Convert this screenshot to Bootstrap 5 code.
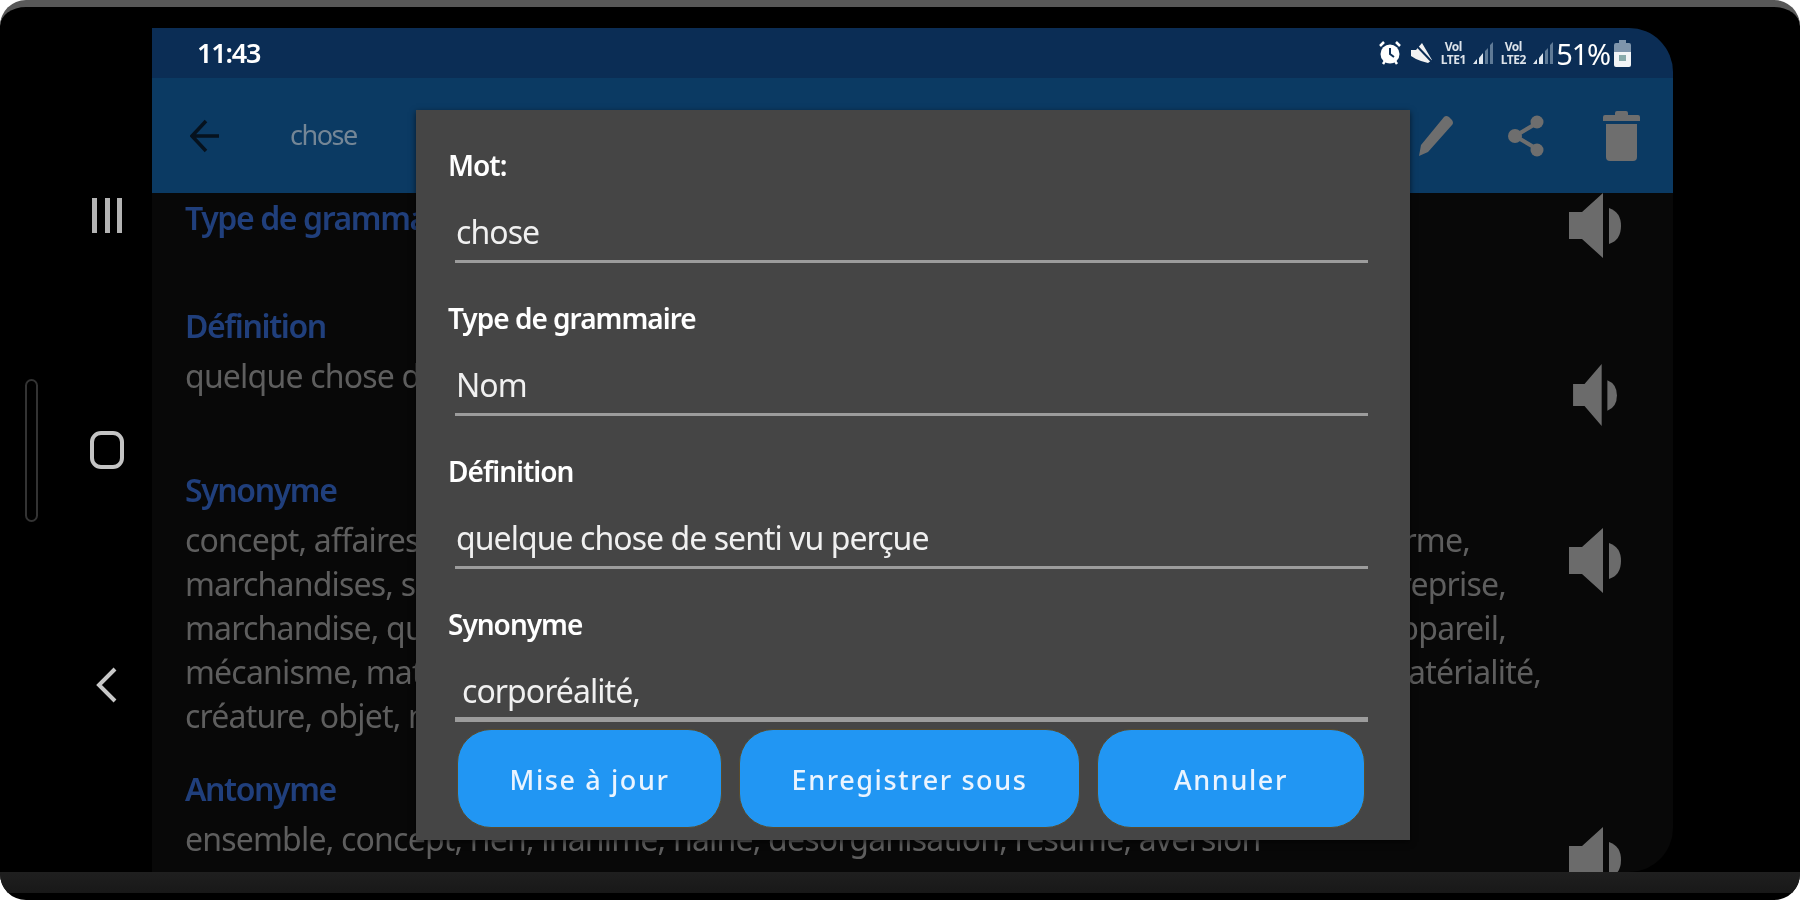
<!DOCTYPE html>
<html lang="fr">
<head>
    <meta charset="UTF-8">
    <meta name="viewport" content="width=device-width, initial-scale=1.0">
    <title>chose</title>
    <link href="https://cdn.jsdelivr.net/npm/bootstrap@5.3.0/dist/css/bootstrap.min.css" rel="stylesheet">
    <style>
        html, body { height: 100%; background: #fff; overflow: hidden; }
        body { font-family: "Noto Sans", "Open Sans", sans-serif; }
        .phone { height: 900px; background: #000; border-top: 7px solid #585858; border-radius: 26px; overflow: hidden; filter: blur(.6px); }
        .phone-main { height: 865px; padding-top: 21px; }
        .rail { width: 152px; }
        .rail-pill { width: 13px; height: 143px; margin: 0 24px 0 25px; border: 2px solid #333; border-radius: 7px; }
        .rail-icons { width: 90px; gap: 198px; }
        .rail-bars { width: 30px; height: 35px; }
        .rail-bars span { width: 5px; background: #b4b4b4; }
        .rail-home { width: 34px; height: 38px; border: 4px solid #c4c4c4; border-radius: 11px; }
        .screen { width: 1521px; height: 844px; background: #080808; border-radius: 0 44px 44px 0; overflow: hidden; }
        .status-bar { height: 50px; background: #0b2d55; padding: 0 42px 0 45px; }
        .status-time { color: #fff; font-size: 27px; font-weight: 600; letter-spacing: -1.2px; }
        .status-pct { color: #fff; font-size: 29px; letter-spacing: -1.2px; line-height: 1; margin-left: 2px; }
        .lte { color: #dde3ea; font-size: 12px; line-height: 13px; font-weight: 700; letter-spacing: -.5px; text-align: center; width: 30px; }
        .app-bar { height: 115px; background: #0b3a63; padding-left: 38px; }
        .app-title { color: #748696; font-size: 27px; letter-spacing: -1.5px; margin-left: 70px; }
        .app-actions { gap: 55px; padding-right: 33px; }
        .act-share { margin-right: 4px; }
        .word-list { padding: 3px 0 0 33px; }
        .word-sec { padding-right: 52px; }
        .word-text { width: 1384px; }
        .sec-head { color: #203f7c; font-size: 32px; font-weight: 600; line-height: 44px; letter-spacing: -1.4px; }
        .sec-line { color: #5e5e5e; font-size: 32px; line-height: 44px; letter-spacing: -.8px; white-space: nowrap; }
        .sec-body { margin-top: 6px; }
        .w-a { width: 1285px; }
        .w-b { width: 1321px; }
        .w-c { width: 1356px; }
        .gap-a { margin-bottom: 46px; }
        .gap-b { margin-bottom: 42px; }
        .gap-c { margin-bottom: 29px; }
        .speaker { flex: none; margin-top: 60px; }
        .speaker-up { margin-top: -3px; }
        .word-dialog { position: absolute; left: 264px; top: 82px; width: 994px; height: 730px; background: #454545; padding: 35px 42px 0 32px; box-shadow: 0 2px 6px rgba(0,0,0,.6); }
        .field-group { margin-bottom: 35px; }
        .field-label { color: #fff; font-size: 28px; font-weight: 600; line-height: 40px; letter-spacing: -1px; margin-bottom: 25px; display: block; }
        .field-val { color: #f0f0f0; font-size: 32px; line-height: 44px; letter-spacing: -.95px; margin-left: 7px; padding: 0 0 6px 1px; border-bottom: 3px solid #9c9c9c; }
        .field-last { border-bottom-width: 5px; padding-left: 7px; padding-bottom: 4px; }
        .field-last-group { margin-bottom: 7px; }
        .dlg-actions { gap: 17px; margin-left: 9px; margin-right: 3px; }
        .dlg-btn { height: 99px; background: #2196f3; border: 1px solid #5a4c2c; border-radius: 34px; color: #eaf4ff; font-size: 27px; font-weight: 500; letter-spacing: 1.6px; padding-top: 10px; }
        .dlg-btn:hover { background: #2196f3; color: #eaf4ff; border-color: #5a4c2c; }
        .btn-w1 { width: 265px; }
        .btn-w2 { width: 341px; }
        .btn-w3 { width: 268px; }
        .chin { height: 21px; background: linear-gradient(#1f1f1f, #181818); }
    </style>
</head>
<body>
<div class="phone">
    <div class="phone-main d-flex">
        <!-- barre de navigation -->
        <div class="rail d-flex align-items-center">
            <div class="rail-pill"></div>
            <div class="rail-icons d-flex flex-column align-items-center">
                <div class="rail-bars d-flex justify-content-between"><span></span><span></span><span></span></div>
                <div class="rail-home"></div>
                <svg width="22" height="36" viewBox="0 0 22 36"><path d="M19 2 3 18l16 16" fill="none" stroke="#c8c8c8" stroke-width="4"/></svg>
            </div>
        </div>

        <div class="screen position-relative">
            <div class="status-bar d-flex align-items-center justify-content-between">
                <span class="status-time">11:43</span>
                <div class="d-flex align-items-center">
                    <svg class="me-2" width="22" height="24" viewBox="0 0 22 24"><circle cx="11" cy="13" r="9.5" fill="#fff"/><path d="M11 7v6l4 3" stroke="#0b2d55" stroke-width="2" fill="none"/><path d="M1 5l4-4M21 5l-4-4M4 23l2-3M18 23l-2-3" stroke="#fff" stroke-width="2.5"/></svg>
                    <svg class="me-1" width="25" height="25" viewBox="0 0 25 25"><path d="M2 9h5l6-7 10 17-4 3L12 20l-5-2-5-3z" fill="#f2f2f2"/><path d="M5 2l19 20" stroke="#0b2d55" stroke-width="2"/></svg>
                    <div class="lte">Vol<br>LTE1</div>
                    <svg class="ms-1 me-1" width="22" height="26" viewBox="0 0 22 26"><path d="M1 24h4v-5zM7 24h4V13l-4 5z" fill="#dfe6ee"/><path d="M13 24h3V8l-3 3zM18 24h3V2l-3 3z" fill="#5f7a96"/></svg>
                    <div class="lte">Vol<br>LTE2</div>
                    <svg class="ms-1" width="22" height="26" viewBox="0 0 22 26"><path d="M1 24h4v-5zM7 24h4V13l-4 5z" fill="#dfe6ee"/><path d="M13 24h3V8l-3 3zM18 24h3V2l-3 3z" fill="#5f7a96"/></svg>
                    <span class="status-pct">51%</span>
                    <svg class="ms-1" width="17" height="27" viewBox="0 0 17 27"><path d="M5 0h7v3h3q2 0 2 2v8H0V5q0-2 2-2h3z" fill="#7f95ab"/><path d="M0 12h17v13q0 2-2 2H2q-2 0-2-2z" fill="#f2f4f6"/><rect x="5" y="15" width="7" height="6" fill="#8aa"/></svg>
                </div>
            </div>
            <div class="app-bar d-flex align-items-center justify-content-between">
                <div class="d-flex align-items-center">
                    <svg width="30" height="34" viewBox="0 0 30 34"><path d="M29 17H3M16 2 2 17l14 15" fill="none" stroke="#06121e" stroke-width="3.5"/></svg>
                    <span class="app-title">chose</span>
                </div>
                <div class="app-actions d-flex align-items-center">
                    <svg width="34" height="41" viewBox="0 0 34 41"><path d="M0 41l2-11L25 2q2-2 5 0l3 3q2 3 0 5L9 37z" fill="#6e6e6e"/></svg>
                    <svg class="act-share" width="36" height="42" viewBox="0 0 36 42"><path d="M29 8 7 21l22 13" fill="none" stroke="#6e6e6e" stroke-width="4"/><circle cx="29" cy="7" r="6.5" fill="#6e6e6e"/><circle cx="7" cy="21" r="7" fill="#6e6e6e"/><circle cx="29" cy="35" r="6.5" fill="#6e6e6e"/></svg>
                    <svg width="37" height="50" viewBox="0 0 37 50"><path d="M12 2q0-2 2-2h9q2 0 2 2v2h10q2 0 2 2v4H0V6q0-2 2-2h10z" fill="#6e6e6e"/><path d="M3 13h31v33q0 4-4 4H7q-4 0-4-4z" fill="#6e6e6e"/></svg>
                </div>
            </div>

            <div class="word-list">
                <div class="word-sec gap-a d-flex justify-content-between">
                    <div class="word-text"><div class="sec-head">Type de grammaire</div></div>
                    <svg class="speaker speaker-up" width="52" height="65" viewBox="0 0 52 65"><path d="M0 19h13L34 0v65L13 46H0z" fill="#6b6b6b"/><path d="M40 15q12 4 12 18t-12 18z" fill="#6b6b6b"/></svg>
                </div>
                <div class="word-sec gap-b d-flex justify-content-between">
                    <div class="word-text">
                        <div class="sec-head">Définition</div>
                        <div class="sec-body sec-line">quelque chose de senti vu perçue</div>
                    </div>
                    <svg class="speaker" width="52" height="62" viewBox="0 0 52 65"><path d="M3 21h12L33 0v65L15 44H3z" fill="#6b6b6b"/><path d="M39 17q10 4 10 16t-10 16z" fill="#6b6b6b"/></svg>
                </div>
                <div class="word-sec gap-c d-flex justify-content-between">
                    <div class="word-text">
                        <div class="sec-head">Synonyme</div>
                        <div class="sec-body">
                            <div class="sec-line w-a d-flex justify-content-between"><span>concept, affaires, sujet</span><span>forme,</span></div>
                            <div class="sec-line w-b d-flex justify-content-between"><span>marchandises, service</span><span>entreprise,</span></div>
                            <div class="sec-line w-b d-flex justify-content-between"><span>marchandise, question</span><span>appareil,</span></div>
                            <div class="sec-line w-c d-flex justify-content-between"><span>mécanisme, matière</span><span>matérialité,</span></div>
                            <div class="sec-line">créature, objet, machin</div>
                        </div>
                    </div>
                    <svg class="speaker" width="52" height="65" viewBox="0 0 52 65"><path d="M0 19h13L34 0v65L13 46H0z" fill="#6b6b6b"/><path d="M40 15q12 4 12 18t-12 18z" fill="#6b6b6b"/></svg>
                </div>
                <div class="word-sec d-flex justify-content-between">
                    <div class="word-text">
                        <div class="sec-head">Antonyme</div>
                        <div class="sec-body sec-line">ensemble, concept, rien, inanimé, haine, désorganisation, résumé, aversion</div>
                    </div>
                    <svg class="speaker" width="52" height="65" viewBox="0 0 52 65"><path d="M0 19h13L34 0v65L13 46H0z" fill="#6b6b6b"/><path d="M40 15q12 4 12 18t-12 18z" fill="#6b6b6b"/></svg>
                </div>
            </div>

            <!-- dialogue de modification -->
            <div class="word-dialog">
                <div class="field-group">
                    <label class="field-label">Mot:</label>
                    <div class="field-val">chose</div>
                </div>
                <div class="field-group">
                    <label class="field-label">Type de grammaire</label>
                    <div class="field-val">Nom</div>
                </div>
                <div class="field-group">
                    <label class="field-label">Définition</label>
                    <div class="field-val">quelque chose de senti vu perçue</div>
                </div>
                <div class="field-last-group">
                    <label class="field-label">Synonyme</label>
                    <div class="field-val field-last">corporéalité,</div>
                </div>
                <div class="dlg-actions d-flex">
                    <button type="button" class="btn dlg-btn btn-w1">Mise à jour</button>
                    <button type="button" class="btn dlg-btn btn-w2">Enregistrer sous</button>
                    <button type="button" class="btn dlg-btn btn-w3">Annuler</button>
                </div>
            </div>
        </div>
    </div>
    <div class="chin"></div>
</div>
<script src="https://cdn.jsdelivr.net/npm/bootstrap@5.3.0/dist/js/bootstrap.bundle.min.js"></script>
</body>
</html>
